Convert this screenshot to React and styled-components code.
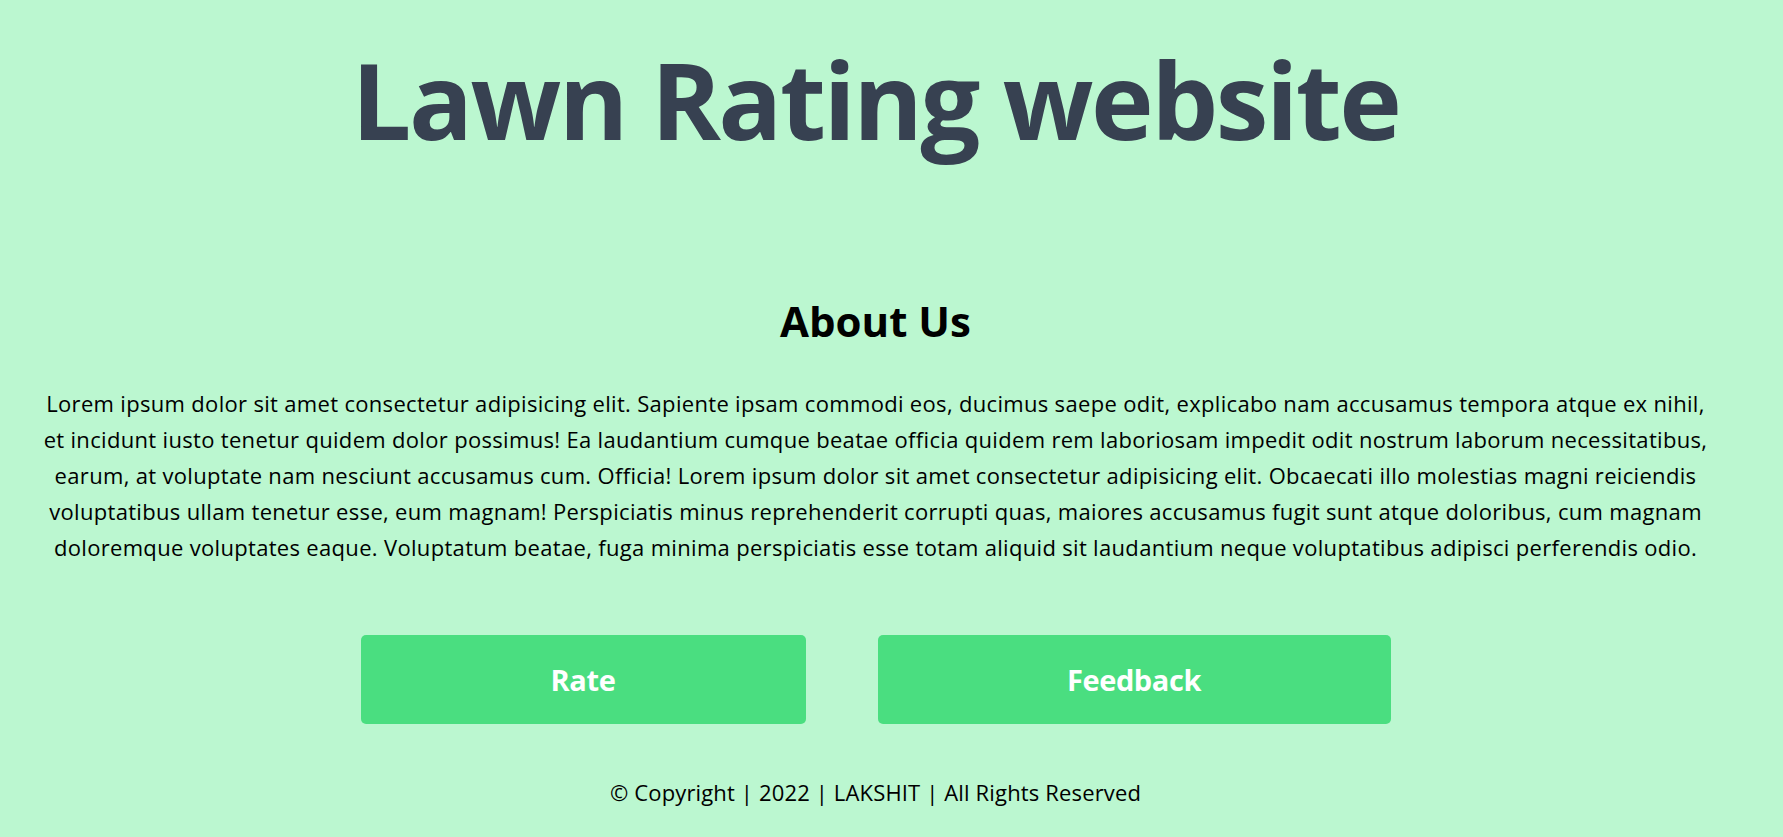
import React from 'react'
import styled, { createGlobalStyle } from 'styled-components'

const GlobalStyle = createGlobalStyle`
    html, body {
        margin: 0;
        padding: 0;
        background: #bbf7d0;
    }
    * {
        box-sizing: border-box;
    }
`

// wrapped the same way the original page wraps it
const aboutLines = [
    "Lorem ipsum dolor sit amet consectetur adipisicing elit. Sapiente ipsam commodi eos, ducimus saepe odit, explicabo nam accusamus tempora atque ex nihil,",
    "et incidunt iusto tenetur quidem dolor possimus! Ea laudantium cumque beatae officia quidem rem laboriosam impedit odit nostrum laborum necessitatibus,",
    "earum, at voluptate nam nesciunt accusamus cum. Officia! Lorem ipsum dolor sit amet consectetur adipisicing elit. Obcaecati illo molestias magni reiciendis",
    "voluptatibus ullam tenetur esse, eum magnam! Perspiciatis minus reprehenderit corrupti quas, maiores accusamus fugit sunt atque doloribus, cum magnam",
    "doloremque voluptates eaque. Voluptatum beatae, fuga minima perspiciatis esse totam aliquid sit laudantium neque voluptatibus adipisci perferendis odio.",
]

const App = () => {
    return (
        <Page>
            <GlobalStyle />
            <Title>Lawn Rating website</Title>
            <About>
                <Heading>About Us</Heading>
                <Text>
                    {aboutLines.map((line, i) => (
                        <React.Fragment key={i}>
                            {line}
                            {i < aboutLines.length - 1 && <br />}
                        </React.Fragment>
                    ))}
                </Text>
            </About>
            <ButtonRow>
                <Button $width={445}>Rate</Button>
                <Button $width={513}>Feedback</Button>
            </ButtonRow>
            <Footer>© Copyright | 2022 | LAKSHIT | All Rights Reserved</Footer>
        </Page>
    )
}

export default App;



const Page = styled.div`
    min-height: 100vh;
    padding: 46px 32px 20px 0;
    background: #bbf7d0;
    font-family: "Open Sans", "Noto Sans", sans-serif;
    color: #000;
    display: flex;
    flex-direction: column;
    align-items: center;
`

const Title = styled.h1`
    margin: 0;
    font-size: 106px;
    line-height: 1;
    font-weight: 700;
    letter-spacing: -2.5px;
    color: #374151;
    text-align: center;
`

const About = styled.section`
    width: 100%;
    padding: 0 20px;
    margin-top: 144px;
    text-align: center;
`

const Heading = styled.h2`
    margin: 0;
    font-size: 42px;
    line-height: 1.2;
    font-weight: 700;
`

const Text = styled.p`
    margin: 39px 0 0;
    font-size: 22px;
    line-height: 36px;
    letter-spacing: 0.32px;
`

const ButtonRow = styled.div`
    display: flex;
    justify-content: center;
    gap: 72px;
    margin-top: 70px;
`

const Button = styled.button`
    width: ${props => props.$width}px;
    height: 89px;
    border: none;
    border-radius: 5px;
    background: #4ade80;
    color: #fff;
    font-family: inherit;
    font-size: 29px;
    font-weight: 700;
    letter-spacing: -0.4px;
    cursor: pointer;
`

const Footer = styled.footer`
    margin-top: 52px;
    font-size: 22px;
    line-height: 1.5;
    letter-spacing: 0.15px;
    text-align: center;
`
